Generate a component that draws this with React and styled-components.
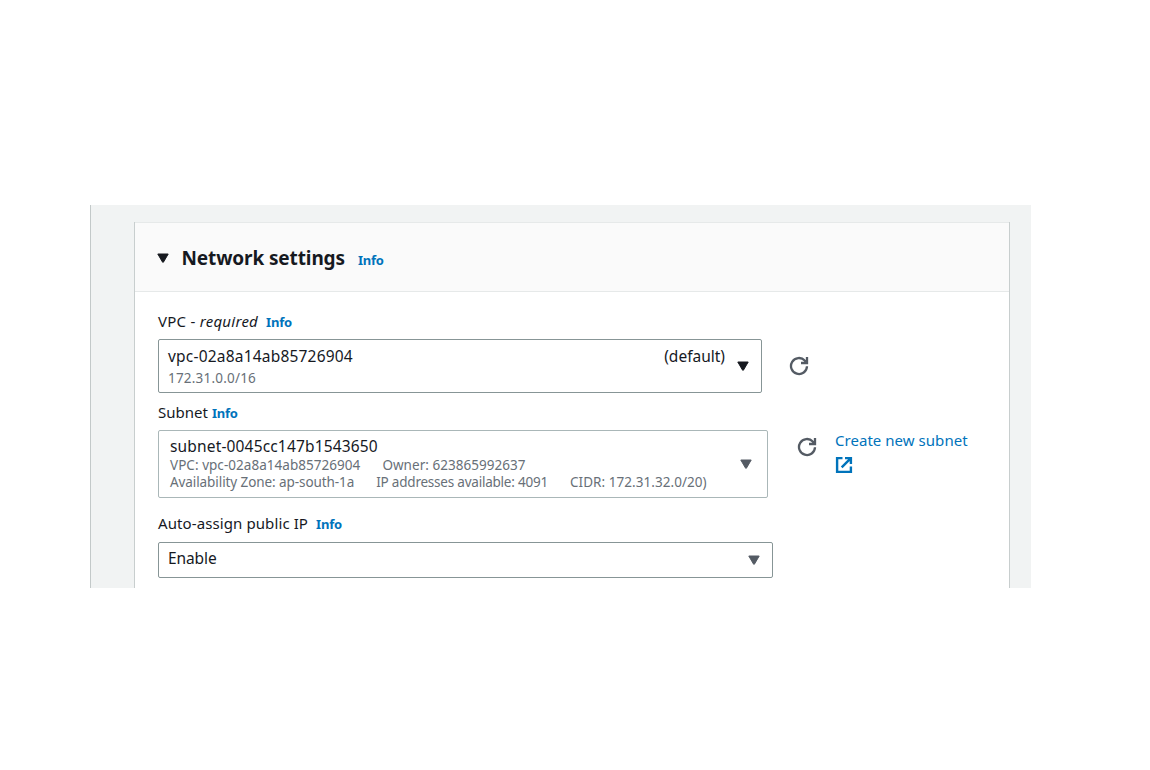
import React from "react";
import styled, { createGlobalStyle } from "styled-components";

const GlobalStyle = createGlobalStyle`
  *, *::before, *::after { box-sizing: border-box; }
  body {
    margin: 0;
    background: #ffffff;
    font-family: "Noto Sans", "Open Sans", sans-serif;
    color: #16191f;
  }
`;

const Page = styled.main`
  width: 1150px;
  height: 770px;
  padding: 205px 119px 182px 90px;
  background: #ffffff;
`;

const Workspace = styled.div`
  height: 383px;
  padding: 17px 21px 0 43px;
  background: #f1f3f3;
  border-left: 1px solid #c3c9c9;
  overflow: hidden;
`;

const Card = styled.section`
  height: 366px;
  background: #ffffff;
  border: solid #c8cece;
  border-width: 0 1px;
`;

const CardHeader = styled.header`
  display: flex;
  align-items: center;
  height: 70px;
  padding: 2px 22px 0;
  background: #fafafa;
  border-top: 1px solid #e6e9e9;
  border-bottom: 1px solid #e6e9e9;
`;

const Title = styled.h2`
  margin: 0 13px 0 12.5px;
  font-size: 19px;
  line-height: 24px;
  font-weight: 700;
  letter-spacing: ${(p) => p.$track}px;
  white-space: nowrap;
`;

const InfoLink = styled.a`
  color: #0073bb;
  font-size: 13px;
  line-height: 20px;
  font-weight: 700;
  letter-spacing: -0.2px;
  margin-top: ${(p) => p.$drop ?? 2}px;
`;

const CardBody = styled.div`
  padding: 18px 0 0 23px;
`;

const Label = styled.div`
  display: flex;
  align-items: center;
  gap: ${(p) => p.$gap}px;
  height: 22px;
  margin-bottom: ${(p) => p.$below}px;
  font-size: 15px;
  line-height: 22px;
  letter-spacing: ${(p) => p.$track ?? 0}px;
  white-space: pre;
`;

const FieldRow = styled.div`
  display: flex;
  margin-bottom: ${(p) => p.$below}px;
`;

const Select = styled.div`
  display: flex;
  flex: none;
  width: ${(p) => p.$width}px;
  height: ${(p) => p.$height}px;
  padding: ${(p) => p.$pad};
  border: 1px solid ${(p) => (p.$muted ? "#aab7b8" : "#879596")};
  border-radius: 2px;
  background: #ffffff;
`;

const Options = styled.div`
  flex: 1;
  min-width: 0;
`;

const Value = styled.div`
  display: flex;
  justify-content: space-between;
  font-size: 15.5px;
  line-height: ${(p) => p.$line ?? 20}px;
  white-space: nowrap;
`;

const Meta = styled.div`
  display: flex;
  gap: ${(p) => p.$gap ?? 22}px;
  margin-top: ${(p) => p.$above ?? 0}px;
  color: #687078;
  font-size: 13.5px;
  line-height: 17px;
  white-space: nowrap;
`;

const Tracked = styled.span`
  letter-spacing: ${(p) => p.$track}px;
`;

const CaretSvg = styled.svg`
  display: block;
  flex: none;
  width: 12px;
  height: 10px;
  margin: ${(p) => p.$margin ?? "0"};
`;

const Caret = ({ color = "#16191f", margin }) => (
  <CaretSvg $margin={margin} viewBox="0 0 12 10" aria-hidden="true">
    <path d="M.8 1h10.4L6.4 9.2H5.6z" fill={color} stroke={color} strokeWidth="1" strokeLinejoin="round" />
  </CaretSvg>
);

const RefreshButton = styled.button`
  flex: none;
  width: 20px;
  height: 20px;
  padding: 0;
  margin: ${(p) => p.$margin};
  border: 0;
  background: none;
  svg { display: block; }
`;

const Refresh = ({ margin }) => (
  <RefreshButton $margin={margin} aria-label="Refresh">
    <svg width="20" height="20" viewBox="0 0 20 20" fill="none" stroke="#545b64" strokeWidth="2.3">
      <path d="M18 10.2A8 8 0 1 1 15.8 4.5L17.6 6.3" />
      <path d="M18 1v6h-6" />
      <path d="M17.5 3.5v3H14z" fill="#545b64" stroke="none" />
    </svg>
  </RefreshButton>
);

const CreateLink = styled.a`
  display: block;
  margin: 0 0 0 18px;
  color: #0073bb;
  font-size: 15px;
  line-height: 20px;
  letter-spacing: ${(p) => p.$track}px;
  white-space: nowrap;
  svg { display: block; margin: 6px 0 0 0; }
`;

export default function App() {
  return (
    <>
      <GlobalStyle />
      <Page>
        <Workspace>
          <Card>
            <CardHeader>
              <Caret />
              <Title $track={-0.12}>Network settings</Title>
              <InfoLink $drop={3}>Info</InfoLink>
            </CardHeader>
            <CardBody>
              <Label $gap={8} $below={7} $track={0.26}>
                <span>VPC - <em>required</em></span>
                <InfoLink>Info</InfoLink>
              </Label>
              <FieldRow $below={8}>
                <Select $width={604} $height={54} $pad="6px 12px 0 9px">
                  <Options>
                    <Value>
                      <Tracked $track={0.2}>vpc-02a8a14ab85726904</Tracked>
                      <Tracked $track={0}>(default)</Tracked>
                    </Value>
                    <Meta $above={4}>
                      <Tracked $track={0.2}>172.31.0.0/16</Tracked>
                    </Meta>
                  </Options>
                  <Caret margin="15px 0 0 12px" />
                </Select>
                <Refresh margin="17px 0 0 27px" />
              </FieldRow>
              <Label $gap={4} $below={7} $track={0}>
                <span>Subnet</span>
                <InfoLink>Info</InfoLink>
              </Label>
              <FieldRow $below={14}>
                <Select $width={610} $height={68} $pad="6px 15px 0 11px" $muted>
                  <Options>
                    <Value $line={19}>
                      <Tracked $track={0.16}>subnet-0045cc147b1543650</Tracked>
                    </Value>
                    <Meta $above={1}>
                      <Tracked $track={0.04}>VPC: vpc-02a8a14ab85726904</Tracked>
                      <Tracked $track={0.04}>Owner: 623865992637</Tracked>
                    </Meta>
                    <Meta>
                      <Tracked $track={-0.08}>Availability Zone: ap-south-1a</Tracked>
                      <Tracked $track={-0.22}>IP addresses available: 4091</Tracked>
                      <Tracked $track={0.05}>CIDR: 172.31.32.0/20)</Tracked>
                    </Meta>
                  </Options>
                  <Caret color="#545b64" margin="22px 0 0 0" />
                </Select>
                <Refresh margin="7px 0 0 29px" />
                <CreateLink $track={0.04}>
                  Create new subnet
                  <svg width="18" height="18" viewBox="0 0 18 18" fill="none" stroke="#0073bb" strokeWidth="2.4">
                    <path d="M7.5 2.1H2.1v13.8h13.8v-5.4" />
                    <path d="M10 2.1h5.9V8M15.6 2.4L6.7 11.3" />
                  </svg>
                </CreateLink>
              </FieldRow>
              <Label $gap={8} $below={8} $track={0.1}>
                <span>Auto-assign public IP</span>
                <InfoLink>Info</InfoLink>
              </Label>
              <FieldRow $below={0}>
                <Select $width={615} $height={36} $pad="5px 12px 0 9px">
                  <Options>
                    <Value>
                      <Tracked $track={-0.1}>Enable</Tracked>
                    </Value>
                  </Options>
                  <Caret color="#545b64" margin="7px 0 0 0" />
                </Select>
              </FieldRow>
            </CardBody>
          </Card>
        </Workspace>
      </Page>
    </>
  );
}
